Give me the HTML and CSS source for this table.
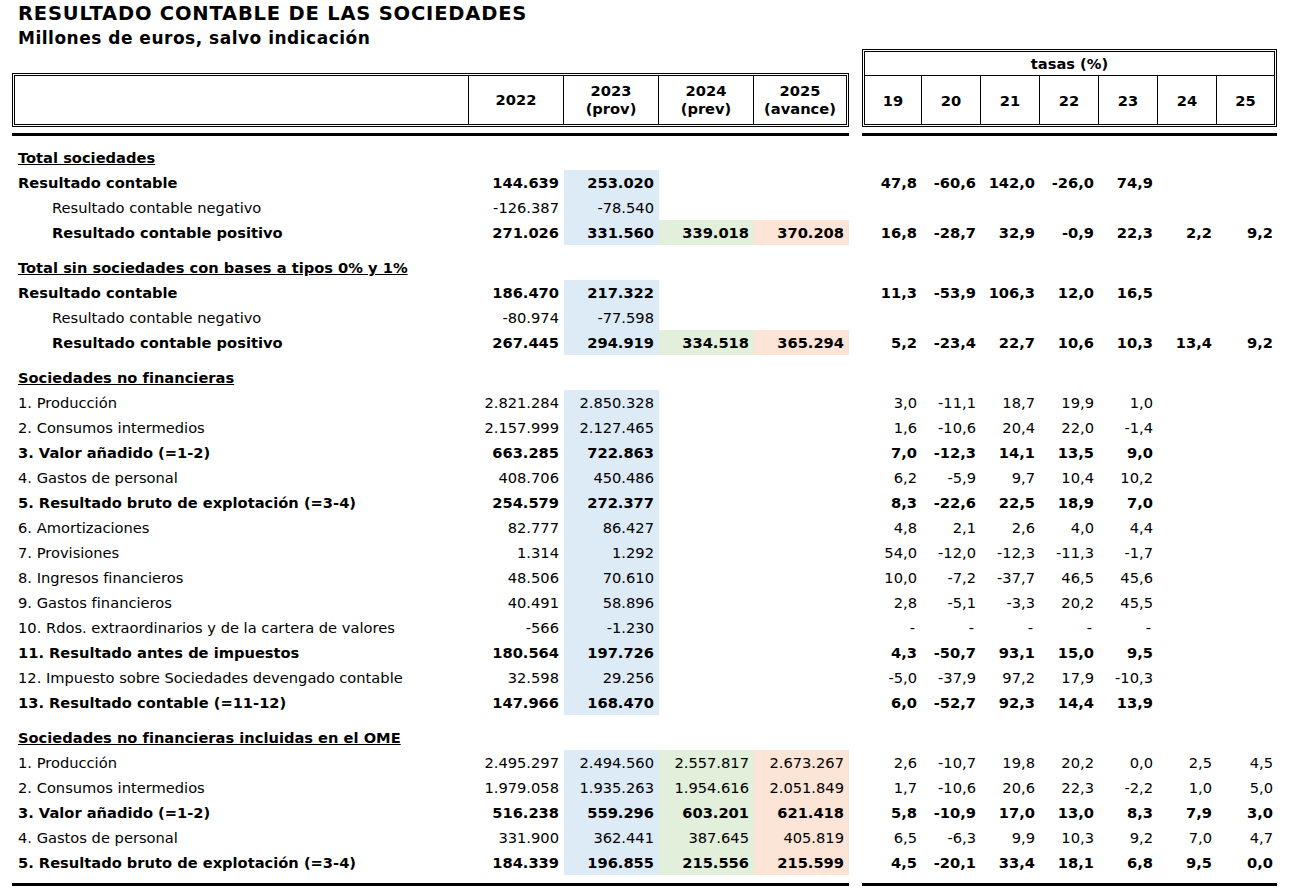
FILE: index.html
```html
<!DOCTYPE html>
<html lang="es">
<head>
<meta charset="utf-8">
<title>Resultado contable de las sociedades</title>
<link rel="stylesheet" href="styles.css">
</head>
<body>
<div class="page">
  <h1 class="title">RESULTADO CONTABLE DE LAS SOCIEDADES</h1>
  <h2 class="subtitle">Millones de euros, salvo indicación</h2>

  <div class="heads">
    <div class="head head-left">
      <div class="hc"></div>
      <div class="hc">2022</div>
      <div class="hc">2023<br>(prov)</div>
      <div class="hc">2024<br>(prev)</div>
      <div class="hc">2025<br>(avance)</div>
    </div>
    <div class="head head-right">
      <div class="tasas">tasas (%)</div>
      <div class="yc">19</div>
      <div class="yc">20</div>
      <div class="yc">21</div>
      <div class="yc">22</div>
      <div class="yc">23</div>
      <div class="yc">24</div>
      <div class="yc">25</div>
    </div>
  </div>
  <div class="rules">
    <div class="rule rule-left"></div>
    <div class="rule rule-right"></div>
  </div>

  <table class="data">
    <colgroup>
      <col class="c-label"><col class="c-num"><col class="c-num"><col class="c-num"><col class="c-num">
      <col class="c-gap">
      <col class="c-pct"><col class="c-pct"><col class="c-pct"><col class="c-pct"><col class="c-pct"><col class="c-pct"><col class="c-pct-last">
    </colgroup>
    <tbody>
      <tr class="spacer first"><td colspan="13"></td></tr>
      <tr class="b"><td class="lbl sec">Total sociedades</td><td></td><td></td><td></td><td></td><td></td><td></td><td></td><td></td><td></td><td></td><td></td><td></td></tr>
      <tr class="b"><td class="lbl">Resultado contable</td><td class="n">144.639</td><td class="n blue">253.020</td><td class="n"></td><td class="n"></td><td></td><td class="p">47,8</td><td class="p">-60,6</td><td class="p">142,0</td><td class="p">-26,0</td><td class="p">74,9</td><td class="p"></td><td class="p"></td></tr>
      <tr><td class="lbl ind">Resultado contable negativo</td><td class="n">-126.387</td><td class="n blue">-78.540</td><td class="n"></td><td class="n"></td><td></td><td class="p"></td><td class="p"></td><td class="p"></td><td class="p"></td><td class="p"></td><td class="p"></td><td class="p"></td></tr>
      <tr class="b"><td class="lbl ind">Resultado contable positivo</td><td class="n">271.026</td><td class="n blue">331.560</td><td class="n green">339.018</td><td class="n orange">370.208</td><td></td><td class="p">16,8</td><td class="p">-28,7</td><td class="p">32,9</td><td class="p">-0,9</td><td class="p">22,3</td><td class="p">2,2</td><td class="p">9,2</td></tr>

      <tr class="spacer"><td colspan="13"></td></tr>
      <tr class="b"><td class="lbl sec">Total sin sociedades con bases a tipos 0% y 1%</td><td></td><td></td><td></td><td></td><td></td><td></td><td></td><td></td><td></td><td></td><td></td><td></td></tr>
      <tr class="b"><td class="lbl">Resultado contable</td><td class="n">186.470</td><td class="n blue">217.322</td><td class="n"></td><td class="n"></td><td></td><td class="p">11,3</td><td class="p">-53,9</td><td class="p">106,3</td><td class="p">12,0</td><td class="p">16,5</td><td class="p"></td><td class="p"></td></tr>
      <tr><td class="lbl ind">Resultado contable negativo</td><td class="n">-80.974</td><td class="n blue">-77.598</td><td class="n"></td><td class="n"></td><td></td><td class="p"></td><td class="p"></td><td class="p"></td><td class="p"></td><td class="p"></td><td class="p"></td><td class="p"></td></tr>
      <tr class="b"><td class="lbl ind">Resultado contable positivo</td><td class="n">267.445</td><td class="n blue">294.919</td><td class="n green">334.518</td><td class="n orange">365.294</td><td></td><td class="p">5,2</td><td class="p">-23,4</td><td class="p">22,7</td><td class="p">10,6</td><td class="p">10,3</td><td class="p">13,4</td><td class="p">9,2</td></tr>

      <tr class="spacer"><td colspan="13"></td></tr>
      <tr class="b"><td class="lbl sec">Sociedades no financieras</td><td></td><td></td><td></td><td></td><td></td><td></td><td></td><td></td><td></td><td></td><td></td><td></td></tr>
      <tr><td class="lbl">1. Producción</td><td class="n">2.821.284</td><td class="n blue">2.850.328</td><td class="n"></td><td class="n"></td><td></td><td class="p">3,0</td><td class="p">-11,1</td><td class="p">18,7</td><td class="p">19,9</td><td class="p">1,0</td><td class="p"></td><td class="p"></td></tr>
      <tr><td class="lbl">2. Consumos intermedios</td><td class="n">2.157.999</td><td class="n blue">2.127.465</td><td class="n"></td><td class="n"></td><td></td><td class="p">1,6</td><td class="p">-10,6</td><td class="p">20,4</td><td class="p">22,0</td><td class="p">-1,4</td><td class="p"></td><td class="p"></td></tr>
      <tr class="b"><td class="lbl">3. Valor añadido (=1-2)</td><td class="n">663.285</td><td class="n blue">722.863</td><td class="n"></td><td class="n"></td><td></td><td class="p">7,0</td><td class="p">-12,3</td><td class="p">14,1</td><td class="p">13,5</td><td class="p">9,0</td><td class="p"></td><td class="p"></td></tr>
      <tr><td class="lbl">4. Gastos de personal</td><td class="n">408.706</td><td class="n blue">450.486</td><td class="n"></td><td class="n"></td><td></td><td class="p">6,2</td><td class="p">-5,9</td><td class="p">9,7</td><td class="p">10,4</td><td class="p">10,2</td><td class="p"></td><td class="p"></td></tr>
      <tr class="b"><td class="lbl">5. Resultado bruto de explotación (=3-4)</td><td class="n">254.579</td><td class="n blue">272.377</td><td class="n"></td><td class="n"></td><td></td><td class="p">8,3</td><td class="p">-22,6</td><td class="p">22,5</td><td class="p">18,9</td><td class="p">7,0</td><td class="p"></td><td class="p"></td></tr>
      <tr><td class="lbl">6. Amortizaciones</td><td class="n">82.777</td><td class="n blue">86.427</td><td class="n"></td><td class="n"></td><td></td><td class="p">4,8</td><td class="p">2,1</td><td class="p">2,6</td><td class="p">4,0</td><td class="p">4,4</td><td class="p"></td><td class="p"></td></tr>
      <tr><td class="lbl">7. Provisiones</td><td class="n">1.314</td><td class="n blue">1.292</td><td class="n"></td><td class="n"></td><td></td><td class="p">54,0</td><td class="p">-12,0</td><td class="p">-12,3</td><td class="p">-11,3</td><td class="p">-1,7</td><td class="p"></td><td class="p"></td></tr>
      <tr><td class="lbl">8. Ingresos financieros</td><td class="n">48.506</td><td class="n blue">70.610</td><td class="n"></td><td class="n"></td><td></td><td class="p">10,0</td><td class="p">-7,2</td><td class="p">-37,7</td><td class="p">46,5</td><td class="p">45,6</td><td class="p"></td><td class="p"></td></tr>
      <tr><td class="lbl">9. Gastos financieros</td><td class="n">40.491</td><td class="n blue">58.896</td><td class="n"></td><td class="n"></td><td></td><td class="p">2,8</td><td class="p">-5,1</td><td class="p">-3,3</td><td class="p">20,2</td><td class="p">45,5</td><td class="p"></td><td class="p"></td></tr>
      <tr><td class="lbl">10. Rdos. extraordinarios y de la cartera de valores</td><td class="n">-566</td><td class="n blue">-1.230</td><td class="n"></td><td class="n"></td><td></td><td class="p dash">-</td><td class="p dash">-</td><td class="p dash">-</td><td class="p dash">-</td><td class="p dash">-</td><td class="p"></td><td class="p"></td></tr>
      <tr class="b"><td class="lbl">11. Resultado antes de impuestos</td><td class="n">180.564</td><td class="n blue">197.726</td><td class="n"></td><td class="n"></td><td></td><td class="p">4,3</td><td class="p">-50,7</td><td class="p">93,1</td><td class="p">15,0</td><td class="p">9,5</td><td class="p"></td><td class="p"></td></tr>
      <tr><td class="lbl">12. Impuesto sobre Sociedades devengado contable</td><td class="n">32.598</td><td class="n blue">29.256</td><td class="n"></td><td class="n"></td><td></td><td class="p">-5,0</td><td class="p">-37,9</td><td class="p">97,2</td><td class="p">17,9</td><td class="p">-10,3</td><td class="p"></td><td class="p"></td></tr>
      <tr class="b"><td class="lbl">13. Resultado contable (=11-12)</td><td class="n">147.966</td><td class="n blue">168.470</td><td class="n"></td><td class="n"></td><td></td><td class="p">6,0</td><td class="p">-52,7</td><td class="p">92,3</td><td class="p">14,4</td><td class="p">13,9</td><td class="p"></td><td class="p"></td></tr>

      <tr class="spacer"><td colspan="13"></td></tr>
      <tr class="b"><td class="lbl sec">Sociedades no financieras incluidas en el OME</td><td></td><td></td><td></td><td></td><td></td><td></td><td></td><td></td><td></td><td></td><td></td><td></td></tr>
      <tr><td class="lbl">1. Producción</td><td class="n">2.495.297</td><td class="n blue">2.494.560</td><td class="n green">2.557.817</td><td class="n orange">2.673.267</td><td></td><td class="p">2,6</td><td class="p">-10,7</td><td class="p">19,8</td><td class="p">20,2</td><td class="p">0,0</td><td class="p">2,5</td><td class="p">4,5</td></tr>
      <tr><td class="lbl">2. Consumos intermedios</td><td class="n">1.979.058</td><td class="n blue">1.935.263</td><td class="n green">1.954.616</td><td class="n orange">2.051.849</td><td></td><td class="p">1,7</td><td class="p">-10,6</td><td class="p">20,6</td><td class="p">22,3</td><td class="p">-2,2</td><td class="p">1,0</td><td class="p">5,0</td></tr>
      <tr class="b"><td class="lbl">3. Valor añadido (=1-2)</td><td class="n">516.238</td><td class="n blue">559.296</td><td class="n green">603.201</td><td class="n orange">621.418</td><td></td><td class="p">5,8</td><td class="p">-10,9</td><td class="p">17,0</td><td class="p">13,0</td><td class="p">8,3</td><td class="p">7,9</td><td class="p">3,0</td></tr>
      <tr><td class="lbl">4. Gastos de personal</td><td class="n">331.900</td><td class="n blue">362.441</td><td class="n green">387.645</td><td class="n orange">405.819</td><td></td><td class="p">6,5</td><td class="p">-6,3</td><td class="p">9,9</td><td class="p">10,3</td><td class="p">9,2</td><td class="p">7,0</td><td class="p">4,7</td></tr>
      <tr class="b"><td class="lbl">5. Resultado bruto de explotación (=3-4)</td><td class="n">184.339</td><td class="n blue">196.855</td><td class="n green">215.556</td><td class="n orange">215.599</td><td></td><td class="p">4,5</td><td class="p">-20,1</td><td class="p">33,4</td><td class="p">18,1</td><td class="p">6,8</td><td class="p">9,5</td><td class="p">0,0</td></tr>
    </tbody>
  </table>

  <div class="rules rules-bottom">
    <div class="rule rule-left"></div>
    <div class="rule rule-right"></div>
  </div>
</div>
</body>
</html>
```

FILE: styles.css
```css
* { box-sizing: border-box; }

body {
  margin: 0;
  background: #fff;
  color: #000;
  font-family: "DejaVu Sans", Verdana, sans-serif;
}

.page {
  width: 1289px;
  padding: 3px 12px 0 12px;
}

.title {
  margin: 0;
  padding-left: 6px;
  font-size: 19.5px;
  line-height: 22px;
  letter-spacing: 0.8px;
  font-weight: bold;
}

.subtitle {
  margin: 3px 0 0;
  padding-left: 6px;
  font-size: 17px;
  line-height: 20px;
  letter-spacing: 0.5px;
  font-weight: bold;
}

/* Header blocks */
.heads {
  display: flex;
  align-items: flex-end;
  gap: 13px;
  margin-top: 1px;
}

.head {
  border: 3px double #000;
  display: grid;
  font-size: 14.67px;
  font-weight: bold;
}

.head-left {
  width: 837px;
  height: 54px;
  grid-template-columns: 454px 95px 95px 95px 92px;
}

.hc {
  border-right: 1px solid #000;
  display: flex;
  align-items: center;
  justify-content: center;
  text-align: center;
  line-height: 18px;
}

.hc:last-child { border-right: 0; }

.head-right {
  width: 415px;
  height: 78px;
  grid-template-columns: 57px repeat(5, 59px) 57px;
  grid-template-rows: 24px 48px;
}

.tasas {
  grid-column: 1 / -1;
  border-bottom: 1px solid #000;
  display: flex;
  align-items: center;
  justify-content: center;
}

.yc {
  border-right: 1px solid #000;
  display: flex;
  align-items: center;
  justify-content: center;
}

.yc:last-child { border-right: 0; }

/* Thick rules */
.rules {
  display: flex;
  gap: 13px;
  margin-top: 6px;
}

.rule {
  height: 3px;
  background: #000;
}

.rule-left { width: 837px; }
.rule-right { width: 415px; }

.rules-bottom { margin-top: 8px; }

/* Data table */
.data {
  width: 1265px;
  table-layout: fixed;
  border-collapse: collapse;
  font-size: 14.67px;
}

.c-label { width: 457px; }
.c-num { width: 95px; }
.c-gap { width: 13px; }
.c-pct { width: 59px; }
.c-pct-last { width: 61px; }

.data td {
  height: 25px;
  padding: 0;
  line-height: 25px;
  white-space: nowrap;
  vertical-align: middle;
}

.data tr.spacer td { height: 10px; line-height: 10px; }
.data tr.spacer.first td { height: 9px; line-height: 9px; }

.data tr.b td { font-weight: bold; }

.data td.lbl { padding-left: 6px; text-align: left; }
.data td.lbl.ind { padding-left: 40px; }
.data td.sec { text-decoration: underline; }

.data td.n { text-align: right; padding-right: 5px; }
.data td.p { text-align: right; padding-right: 4px; }
.data td.p.dash { padding-right: 6px; }

.data td.blue { background: #ddebf7; }
.data td.green { background: #e2efda; }
.data td.orange { background: #fce4d6; }
```
